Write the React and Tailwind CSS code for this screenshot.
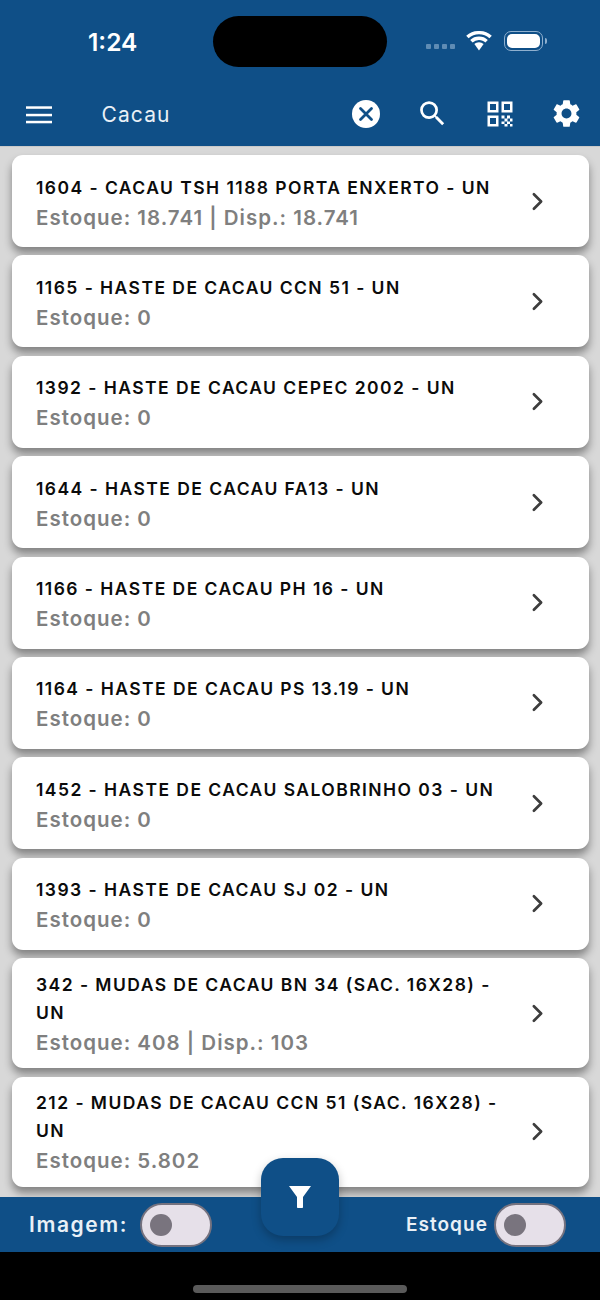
import React from "react";
import { ChevronRight } from "lucide-react";
import { MdSearch, MdSettings } from "react-icons/md";

const items = [
  { title: "1604 - CACAU TSH 1188 PORTA ENXERTO - UN", stock: "Estoque: 18.741 | Disp.: 18.741" },
  { title: "1165 - HASTE DE CACAU CCN 51 - UN", stock: "Estoque: 0" },
  { title: "1392 - HASTE DE CACAU CEPEC 2002 - UN", stock: "Estoque: 0" },
  { title: "1644 - HASTE DE CACAU FA13 - UN", stock: "Estoque: 0" },
  { title: "1166 - HASTE DE CACAU PH 16 - UN", stock: "Estoque: 0" },
  { title: "1164 - HASTE DE CACAU PS 13.19 - UN", stock: "Estoque: 0" },
  { title: "1452 - HASTE DE CACAU SALOBRINHO 03 - UN", stock: "Estoque: 0" },
  { title: "1393 - HASTE DE CACAU SJ 02 - UN", stock: "Estoque: 0" },
  { title: "342 - MUDAS DE CACAU BN 34 (SAC. 16X28) - UN", stock: "Estoque: 408 | Disp.: 103", tall: true },
  { title: "212 - MUDAS DE CACAU CCN 51 (SAC. 16X28) - UN", stock: "Estoque: 5.802", tall: true },
];

function QrIcon() {
  return (
    <svg width="26" height="26" viewBox="0 0 26 26" fill="none" className="text-white">
      <path d="M0.5 0.5h11v11h-11zM14.5 0.5h11v11h-11zM0.5 14.5h11v11h-11z M3 3v6h6V3z M17 3v6h6V3z M3 17v6h6v-6z" fill="currentColor" fillRule="evenodd" />
      <path d="M14.5 14.5h3v3h-3zM20 14.5h3v3h-3zM17.5 17.5h3v3h-3zM23 17.5h2.5v3H23zM14.5 20.5h3v2.5h-3zM20 20.5h3v2.5h-3zM17.5 23h3v2.5h-3zM23 23h2.5v2.5H23z" fill="currentColor" />
    </svg>
  );
}

function Toggle() {
  return (
    <div className="flex h-[44px] w-[72px] items-center rounded-full border-[2.5px] border-[#75727f] bg-[#e6e0e9] pl-[8px]">
      <span className="size-[22px] rounded-full bg-[#79747e]" />
    </div>
  );
}

function ProductCard({ title, stock, tall }) {
  return (
    <div className={`flex shrink-0 items-center rounded-[11px] bg-white pr-[36.5px] pl-[24.5px] shadow-[0_6px_9px_rgba(0,0,0,0.4)] ${tall ? "h-[110px]" : "h-[92px]"}`}>
      <div className={`min-w-0 flex-1 pr-[12px] ${tall ? "pt-[1px]" : "pt-[3px]"}`}>
        <p className="text-[17.5px] leading-[28px] font-semibold tracking-[1.45px] text-[#0b0b0b]">{title}</p>
        <p className="mt-[2px] text-[20.5px] leading-[28px] font-semibold tracking-[1px] text-[#7f7f7f]">{stock}</p>
      </div>
      <ChevronRight size={29} strokeWidth={2.2} className="shrink-0 text-[#3d3d3d]" />
    </div>
  );
}

export default function App() {
  return (
    <div className="relative flex h-[1300px] w-[600px] flex-col overflow-hidden bg-black font-['Inter',sans-serif]">
      <header className="h-[146px] shrink-0 bg-[#0f4f87]">
        <div className="relative flex h-[85px] items-center">
          <span className="mt-[-1px] ml-[88px] text-[24.5px] font-semibold text-white">1:24</span>
          <div className="absolute top-[16px] left-[213px] h-[51px] w-[174px] rounded-full bg-black" />
          <div className="mb-[4px] ml-auto flex items-center pr-[53px]">
            <div className="mt-[12px] flex gap-[3px]">
              <span className="size-[5px] rounded-[1px] bg-[#5f8cb4]" />
              <span className="size-[5px] rounded-[1px] bg-[#5f8cb4]" />
              <span className="size-[5px] rounded-[1px] bg-[#5f8cb4]" />
              <span className="size-[5px] rounded-[1px] bg-[#5f8cb4]" />
            </div>
            <svg width="28" height="20" viewBox="0 0 28 20" className="ml-[10px]" fill="white">
              <path d="M14 3.2c4 0 7.6 1.5 10.4 4L26.8 4.7A18.6 18.6 0 0 0 14 0 18.6 18.6 0 0 0 1.2 4.7l2.4 2.5A15.4 15.4 0 0 1 14 3.2z" />
              <path d="M14 9c2.5 0 4.7.9 6.4 2.5l2.4-2.5A12.8 12.8 0 0 0 14 5.6 12.8 12.8 0 0 0 5.2 9l2.4 2.5A9.3 9.3 0 0 1 14 9z" />
              <path d="M14 11.2c-1.8 0-3.4.7-4.6 1.8L14 19.6l4.6-6.6a6.8 6.8 0 0 0-4.6-1.8z" />
            </svg>
            <div className="ml-[11px] flex items-center">
              <div className="flex h-[20px] w-[39px] items-center rounded-[7px] border border-[#8fb0cf] p-[2px]">
                <div className="h-full w-full rounded-[5px] bg-white" />
              </div>
              <span className="ml-[2px] h-[6px] w-[2px] rounded-r-full bg-[#8fb0cf]" />
            </div>
          </div>
        </div>
        <div className="flex h-[61px] items-start">
          <svg width="26" height="18" viewBox="0 0 26 18" fill="white" className="mt-[20.5px] ml-[26px]">
            <rect x="0" y="0.3" width="26" height="2.5" />
            <rect x="0" y="7.8" width="26" height="2.5" />
            <rect x="0" y="14.8" width="26" height="2.5" />
          </svg>
          <span className="mt-[17px] ml-[49.5px] text-[21px] leading-[26px] tracking-[1.1px] text-[#e9f0f6]">Cacau</span>
          <div className="mt-[12px] ml-auto flex items-center pr-[17.5px]">
            <svg width="28" height="28" viewBox="0 0 28 28">
              <circle cx="14" cy="14" r="14" fill="white" />
              <path d="M8.5 8.5l11 11M19.5 8.5l-11 11" stroke="#0f4f87" strokeWidth="2.8" strokeLinecap="round" />
            </svg>
            <MdSearch size={33} className="ml-[36px] text-white" />
            <div className="ml-[37.5px]"><QrIcon /></div>
            <MdSettings size={33} className="ml-[37px] text-white" />
          </div>
        </div>
      </header>

      <main className="flex h-[1051px] shrink-0 flex-col gap-[8.4px] overflow-hidden border-t border-[#c9c9c9] bg-[#d8d8d8] px-[11.5px] pt-[8px]">
        {items.map((item) => (
          <ProductCard key={item.title} {...item} />
        ))}
      </main>

      <footer className="flex h-[55px] shrink-0 items-center justify-between bg-[#0f4f87] pr-[34px] pl-[29px]">
        <div className="flex items-center gap-[11.5px]">
          <span className="pt-[1px] text-[21px] font-semibold tracking-[1.6px] text-[#e9f0f6]">Imagem:</span>
          <Toggle />
        </div>
        <div className="flex items-center gap-[6px]">
          <span className="pt-[2px] text-[19px] font-semibold tracking-[1.05px] text-[#e9f0f6]">Estoque</span>
          <Toggle />
        </div>
      </footer>

      <div className="flex flex-1 items-end justify-center pb-[7px]">
        <div className="h-[8px] w-[214px] rounded-full bg-[#5a5a5a]" />
      </div>

      <button type="button" className="absolute top-[1158px] left-[261px] flex size-[78px] items-center justify-center rounded-[22px] bg-[#0f4f87] shadow-[0_4px_10px_rgba(0,0,0,0.25)]">
        <svg width="22" height="22" viewBox="0 0 22 22" fill="white"><path d="M0 0h22L14 11v10.2a.8.8 0 0 1-.8.8H8.8a.8.8 0 0 1-.8-.8V11z" /></svg>
      </button>
    </div>
  );
}
